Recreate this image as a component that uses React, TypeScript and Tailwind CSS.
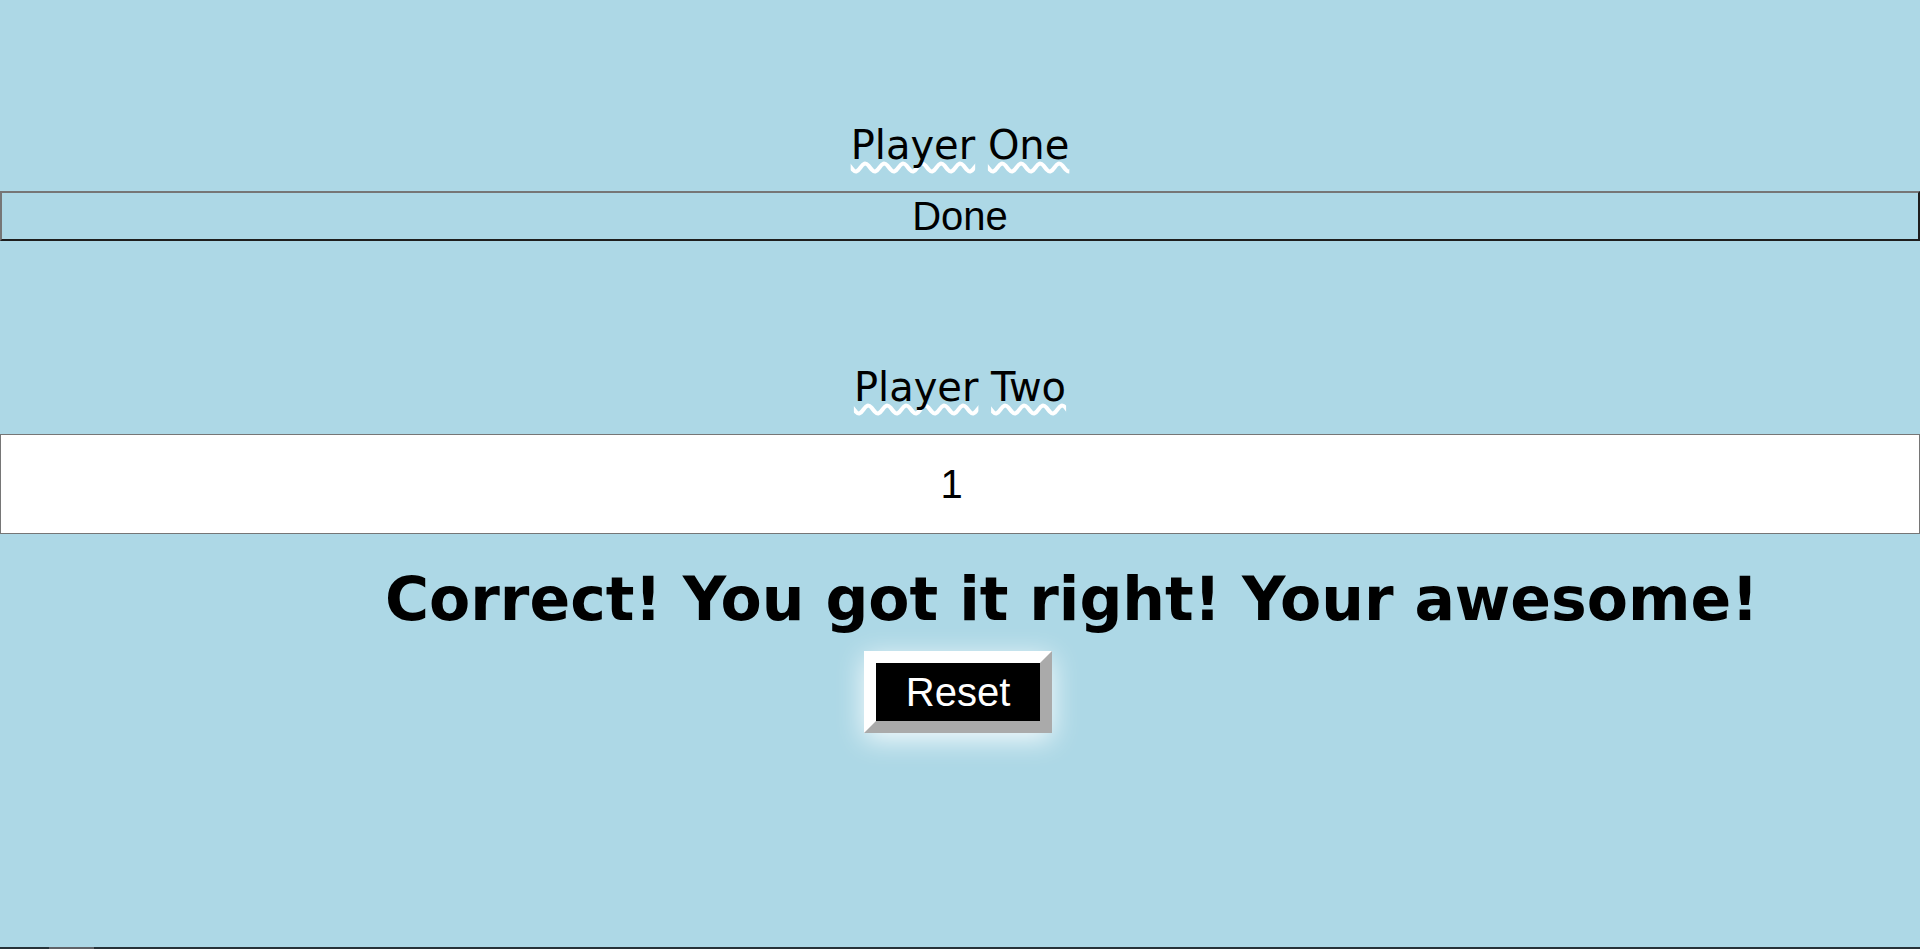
import { useState } from 'react'

const labelFont = { fontFamily: '"DejaVu Sans", Verdana, sans-serif' }
const bodyFont = { fontFamily: '"Liberation Sans", Arial, sans-serif' }

function PlayerLabel({ words }: { words: string[] }) {
  return (
    <div className="text-center text-[40px] leading-[48px] text-black" style={labelFont}>
      {words.map((w, i) => (
        <span key={w}>
          <span className="underline decoration-wavy decoration-white decoration-[4px] underline-offset-[3px] [text-decoration-skip-ink:none]">{w}</span>
          {i < words.length - 1 ? ' ' : ''}
        </span>
      ))}
    </div>
  )
}

export default function App() {
  const [guess, setGuess] = useState('1')

  return (
    <div className="flex min-h-screen flex-col overflow-hidden bg-[#add8e6]">
      <div className="flex-1 pt-[121px]">
        {/* Player one */}
        <PlayerLabel words={['Player', 'One']} />
        <button
          className="mt-[22px] block h-[50px] w-full border-2 border-t-[#767676] border-l-[#767676] border-r-[#1e1e1e] border-b-[#1e1e1e] bg-transparent text-[40px] leading-[46px] text-black"
          style={bodyFont}
        >
          Done
        </button>

        {/* Player two */}
        <div className="mt-[122px]">
          <PlayerLabel words={['Player', 'Two']} />
        </div>
        <input
          type="number"
          value={guess}
          onChange={(e) => setGuess(e.target.value)}
          className="mt-[23px] block h-[100px] w-full border border-[#767676] bg-white pr-[2px] text-center text-[40px] leading-[46px] text-black outline-none"
          style={bodyFont}
        />

        {/* Result */}
        <h1
          className="mt-[29px] whitespace-nowrap pl-[385px] text-left text-[60px] font-bold leading-[72px] text-black"
          style={labelFont}
        >
          Correct! You got it right! Your awesome!
        </h1>

        <div className="mt-[16px] flex justify-center pr-[4px]">
          <button
            className="flex h-[82px] w-[188px] items-center justify-center border-[12px] border-t-white border-l-white border-r-[#aaaaaa] border-b-[#aaaaaa] bg-black text-[40px] leading-[46px] text-white shadow-[0_6px_26px_rgba(255,255,255,0.9)]"
            style={bodyFont}
            onClick={() => setGuess('')}
          >
            Reset
          </button>
        </div>
      </div>

      {/* scrollbar strip */}
      <div className="h-[2px] bg-[#263238] pl-[49px]">
        <div className="h-full w-[45px] bg-[#5f6368]" />
      </div>
    </div>
  )
}
